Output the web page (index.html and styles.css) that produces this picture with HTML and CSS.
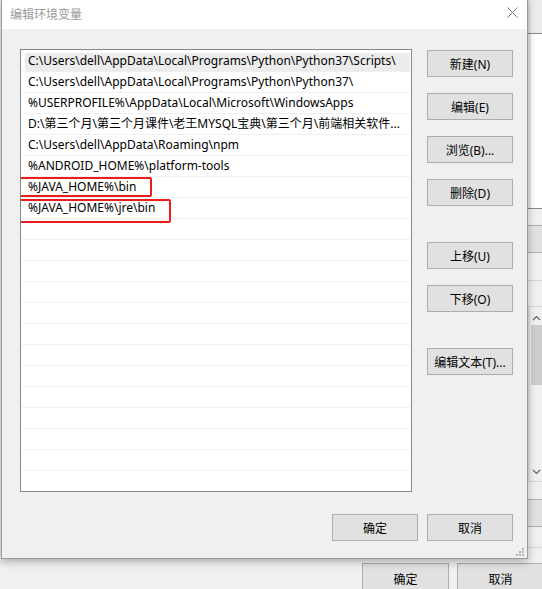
FILE: index.html
```html
<!DOCTYPE html>
<html lang="zh-CN">
<head>
<meta charset="utf-8">
<title>编辑环境变量</title>
<link rel="stylesheet" href="styles.css">
</head>
<body>
<div class="desk">
  <div class="desk-top">
    <div class="strip">
      <div class="seg seg-head"></div>
      <div class="seg seg-dark"></div>
      <div class="seg seg-white"></div>
      <div class="seg seg-dark"></div>
      <div class="seg seg-grey h16"></div>
      <div class="seg seg-btn h28"></div>
      <div class="seg seg-grey h27"></div>
      <div class="seg seg-line"></div>
      <div class="seg seg-grey h25"></div>
      <div class="seg seg-line"></div>
      <div class="seg seg-scroll">
        <svg class="arrow" width="9" height="6" viewBox="0 0 9 6"><path d="M1 5 L4.5 1.5 L8 5" fill="none" stroke="#606060" stroke-width="1.2"/></svg>
        <div class="thumb"></div>
        <div class="scroll-fill"></div>
        <svg class="arrow" width="9" height="6" viewBox="0 0 9 6"><path d="M1 1 L4.5 4.5 L8 1" fill="none" stroke="#606060" stroke-width="1.2"/></svg>
      </div>
      <div class="seg seg-line"></div>
      <div class="seg seg-grey h17"></div>
      <div class="seg seg-btn h28"></div>
      <div class="seg seg-grey h20"></div>
      <div class="seg seg-line"></div>
      <div class="seg seg-grey fill"></div>
    </div>
  </div>
  <div class="desk-foot">
    <div class="btn">确定</div>
    <div class="btn">取消</div>
  </div>
</div>

<div class="dlg">
  <div class="titlebar">
    <span class="title">编辑环境变量</span>
    <svg class="close" width="11" height="11" viewBox="0 0 11 11"><path d="M0.5 0.5 L10.5 10.5 M10.5 0.5 L0.5 10.5" stroke="#7a7a7a" stroke-width="1"/></svg>
  </div>
  <div class="dlg-body">
    <div class="list">
      <div class="row sel">C:\Users\dell\AppData\Local\Programs\Python\Python37\Scripts\</div>
      <div class="row">C:\Users\dell\AppData\Local\Programs\Python\Python37\</div>
      <div class="row">%USERPROFILE%\AppData\Local\Microsoft\WindowsApps</div>
      <div class="row">D:\第三个月\第三个月课件\老王MYSQL宝典\第三个月\前端相关软件...</div>
      <div class="row">C:\Users\dell\AppData\Roaming\npm</div>
      <div class="row">%ANDROID_HOME%\platform-tools</div>
      <div class="row">%JAVA_HOME%\bin<span class="mark mark1"></span></div>
      <div class="row">%JAVA_HOME%\jre\bin<span class="mark mark2"></span></div>
      <div class="row"></div>
      <div class="row"></div>
      <div class="row"></div>
      <div class="row"></div>
      <div class="row"></div>
      <div class="row"></div>
      <div class="row"></div>
      <div class="row"></div>
      <div class="row"></div>
      <div class="row"></div>
      <div class="row"></div>
      <div class="row"></div>
      <div class="row"></div>
    </div>
    <div class="side">
      <div class="group">
        <div class="btn">新建(N)</div>
        <div class="btn">编辑(E)</div>
        <div class="btn">浏览(B)...</div>
        <div class="btn">删除(D)</div>
      </div>
      <div class="group">
        <div class="btn">上移(U)</div>
        <div class="btn">下移(O)</div>
      </div>
      <div class="group">
        <div class="btn">编辑文本(T)...</div>
      </div>
    </div>
    <div class="actions">
      <div class="btn">确定</div>
      <div class="btn">取消</div>
    </div>
  </div>
  <svg class="grip" width="8" height="8" viewBox="0 0 8 8">
    <rect x="6" y="0" width="2" height="2" fill="#b4b4b4"/>
    <rect x="3" y="3" width="2" height="2" fill="#b4b4b4"/>
    <rect x="6" y="3" width="2" height="2" fill="#b4b4b4"/>
    <rect x="0" y="6" width="2" height="2" fill="#b4b4b4"/>
    <rect x="3" y="6" width="2" height="2" fill="#b4b4b4"/>
    <rect x="6" y="6" width="2" height="2" fill="#b4b4b4"/>
  </svg>
</div>
</body>
</html>
```

FILE: styles.css
```css
* { box-sizing: border-box; }

html, body {
  margin: 0;
  padding: 0;
}

body {
  width: 542px;
  height: 589px;
  overflow: hidden;
  position: relative;
  background: #f0f0f0;
  font-family: "Noto Sans", "Noto Sans CJK SC", sans-serif;
  font-size: 12px;
  color: #000;
}

/* ---------- background window ---------- */
.desk {
  display: grid;
  grid-template-rows: 559px 30px;
  height: 589px;
}

.desk-top {
  display: flex;
  justify-content: flex-end;
}

.strip {
  width: 14px;
  display: flex;
  flex-direction: column;
}

.seg { flex: none; }
.seg-head { height: 33px; background: linear-gradient(90deg, #dcdcdc 0 2px, #ececec 2px); }
.seg-dark { height: 1px; background: #8a8a8a; }
.seg-white { height: 174px; background: linear-gradient(90deg, #e6e6e6 0 3px, #ffffff 3px); }
.seg-grey { background: #f0f0f0; }
.seg-line { height: 1px; background: #d6d6d6; }
.seg-btn { background: #e1e1e1; border-top: 1px solid #adadad; border-bottom: 1px solid #adadad; }
.h16 { height: 16px; }
.h17 { height: 17px; }
.h20 { height: 20px; }
.h25 { height: 25px; }
.h27 { height: 27px; }
.h28 { height: 28px; }
.fill { flex: 1; }

.seg-scroll {
  height: 174px;
  display: flex;
  flex-direction: column;
  align-items: flex-end;
  padding: 8px 0 6px 0;
  gap: 4px;
  background: linear-gradient(90deg, #e2e2e2 0 2px, #f0f0f0 2px);
}
.arrow { flex: none; margin-right: 1px; }
.thumb { width: 11px; height: 60px; background: #cdcdcd; flex: none; }
.scroll-fill { flex: 1; }

.desk-foot {
  display: flex;
  justify-content: flex-end;
  gap: 8px;
  padding-top: 4px;
  margin-right: -2px;
}
.desk-foot .btn { width: 87px; height: 30px; border-bottom: none; }

/* ---------- dialog ---------- */
.dlg {
  position: absolute;
  left: 1px;
  top: -1px;
  width: 527px;
  height: 560px;
  border: 1px solid #9a9a9a;
  background: #f0f0f0;
  box-shadow: 0 3px 8px rgba(0, 0, 0, 0.28);
  display: flex;
  flex-direction: column;
}

.titlebar {
  height: 29px;
  flex: none;
  background: #ffffff;
  display: flex;
  justify-content: space-between;
  align-items: flex-start;
  padding: 0 9px 0 8px;
}

.title {
  font-family: "Noto Sans CJK SC", sans-serif;
  font-size: 12px;
  line-height: 28px;
  color: #9a9a9a;
}

.close { margin-top: 7px; flex: none; }

.dlg-body {
  flex: 1;
  display: grid;
  grid-template-columns: 392px 86px;
  grid-template-rows: 443px 27px;
  column-gap: 15px;
  row-gap: 22px;
  padding: 20px 14px 17px 18px;
}

.list {
  border: 1px solid #828790;
  background: #ffffff;
  padding-top: 1px;
  overflow: hidden;
}

.row {
  position: relative;
  height: 21px;
  margin: 0 1px;
  padding-left: 6px;
  border-bottom: 1px solid #efefef;
  line-height: 20px;
  white-space: nowrap;
}

.row.sel {
  background: linear-gradient(#ececec, #ececec) 3px 2px / calc(100% - 3px) 18px no-repeat;
}

.mark {
  position: absolute;
  border: 2px solid #ee1d1d;
  border-radius: 2px;
  left: -3px;
}
.mark1 { top: 0; width: 133px; height: 20px; }
.mark2 { top: 1px; width: 152px; height: 24px; }

.side {
  margin-top: 1px;
  display: flex;
  flex-direction: column;
  gap: 36px;
}

.group {
  display: flex;
  flex-direction: column;
  gap: 16px;
}

.btn {
  height: 27px;
  background: #e1e1e1;
  border: 1px solid #adadad;
  display: flex;
  align-items: center;
  justify-content: center;
  font-size: 12px;
  color: #000;
  white-space: nowrap;
  flex: none;
}

.actions {
  grid-column: 1 / span 2;
  display: flex;
  justify-content: flex-end;
  gap: 9px;
}
.actions .btn { width: 86px; }

.grip {
  position: absolute;
  right: 3px;
  bottom: 2px;
}
```
